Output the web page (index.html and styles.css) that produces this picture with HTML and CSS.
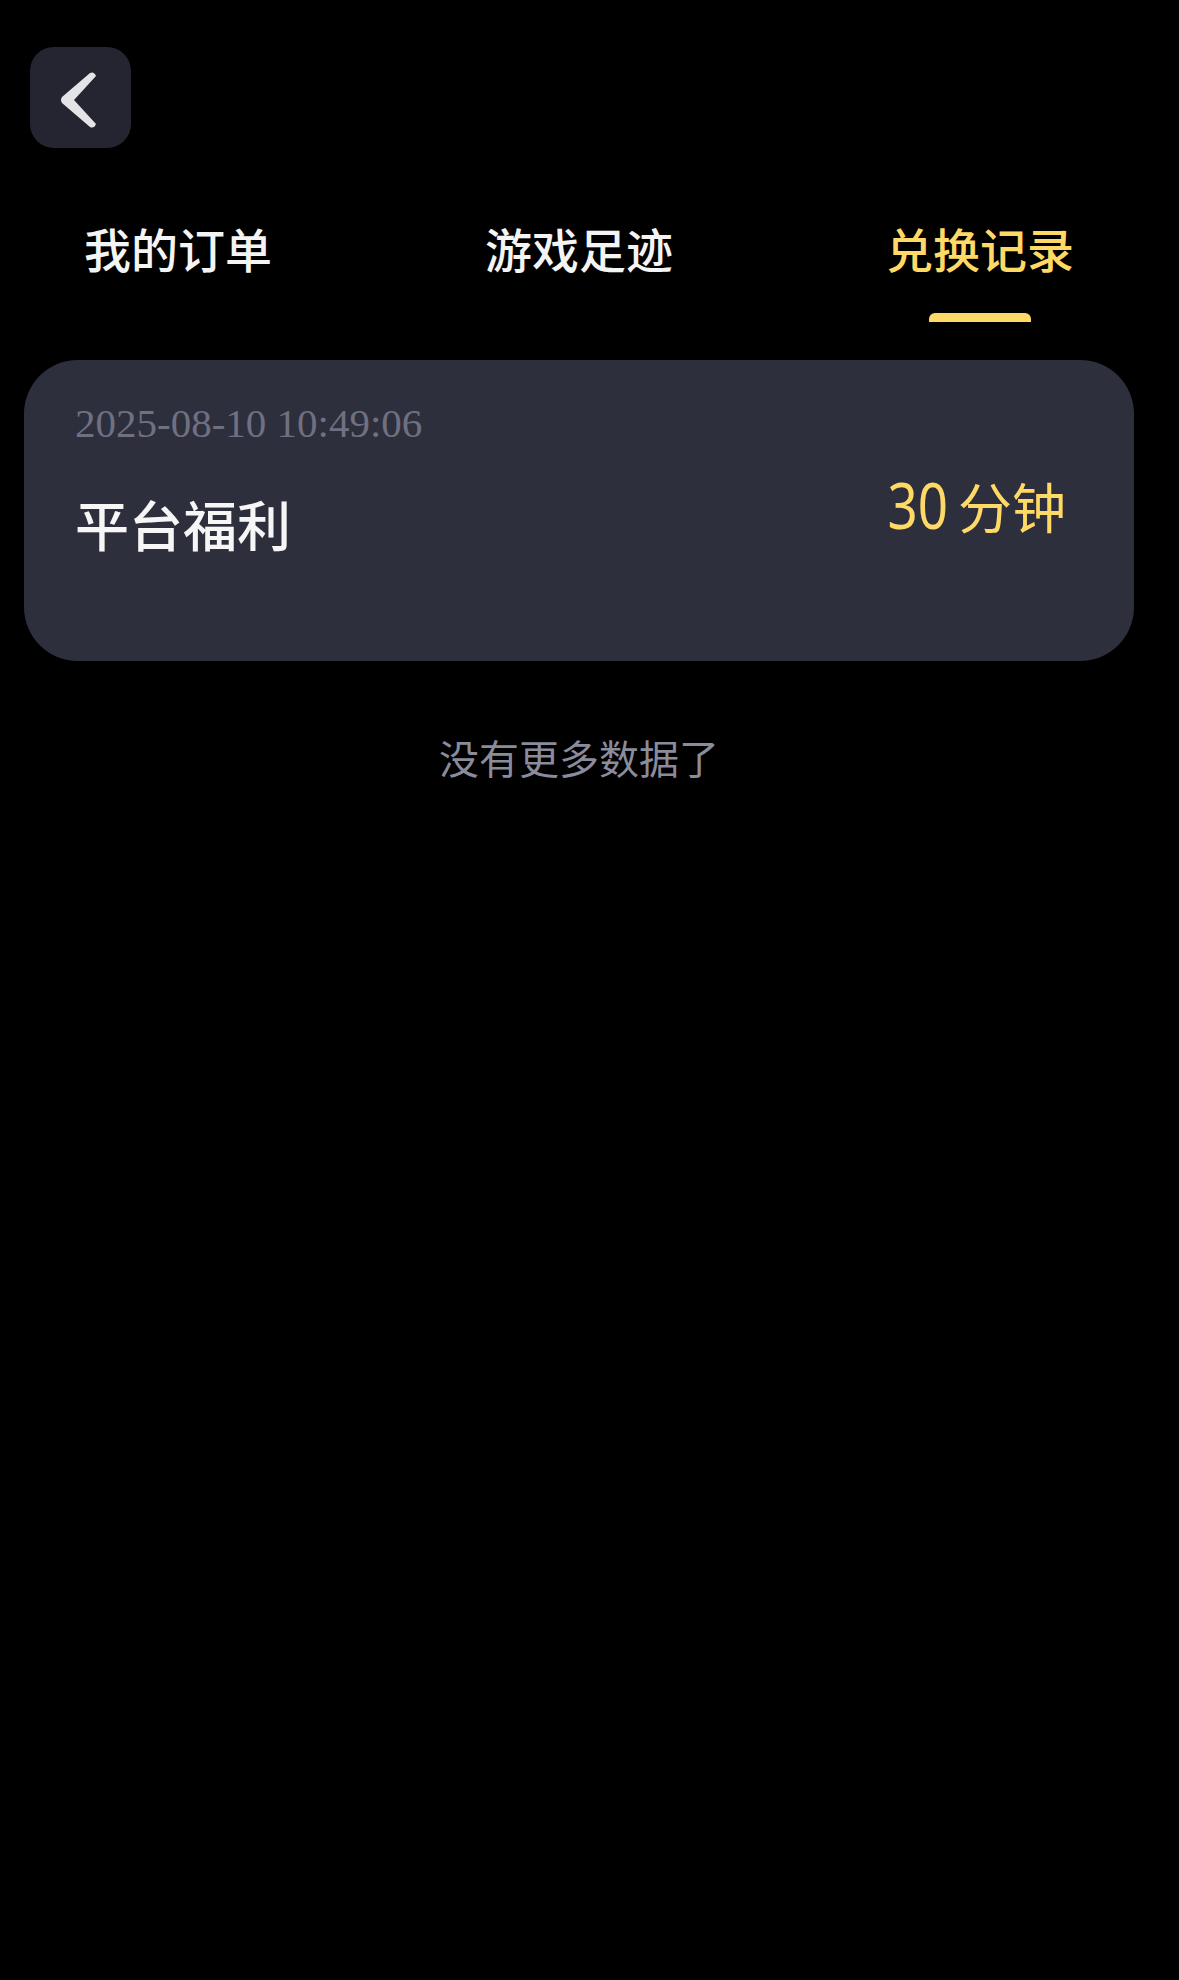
FILE: index.html
```html
<!DOCTYPE html>
<html lang="zh-CN">
<head>
<meta charset="utf-8">
<title>兑换记录</title>
<link rel="stylesheet" href="styles.css">
</head>
<body>
<div class="page">
  <header class="topbar">
    <button class="back-btn" type="button" aria-label="返回">
      <svg class="back-icon" viewBox="0 0 101 101" width="101" height="101">
        <path d="M60 26 L32 50 Q30 53 32 56 L60 80 Q64 82 66 77 L44 53 L66 29 Q64 24 60 26 Z"/>
      </svg>
    </button>
  </header>

  <nav class="tabs">
    <div class="tab">我的订单</div>
    <div class="tab">游戏足迹</div>
    <div class="tab tab-active">兑换记录</div>
  </nav>

  <main class="list">
    <section class="record-card">
      <div class="record-main">
        <div class="record-time">2025-08-10 10:49:06</div>
        <div class="record-title">平台福利</div>
      </div>
      <div class="record-amount"><span class="amount-num">30</span>分钟</div>
    </section>

    <p class="list-end">没有更多数据了</p>
  </main>
</div>
</body>
</html>
```

FILE: styles.css
```css
html, body {
  margin: 0;
  padding: 0;
  background: #000;
}

body {
  width: 1179px;
  min-height: 1980px;
  font-family: "Noto Sans CJK SC", "Noto Sans", sans-serif;
  color: #f2f2f2;
}

.page {
  display: flex;
  flex-direction: column;
}

/* top bar with back button */
.topbar {
  padding: 47px 0 0 30px;
  height: 101px;
}

.back-btn {
  width: 101px;
  height: 101px;
  border: 0;
  padding: 0;
  border-radius: 24px;
  background: #252532;
  display: flex;
  align-items: center;
  justify-content: center;
}

.back-icon {
  display: block;
  fill: #e4e4e6;
}

/* tab bar */
.tabs {
  display: flex;
  gap: 213px;
  padding-left: 84px;
  margin-top: 75px;
}

.tab {
  position: relative;
  font-size: 47px;
  line-height: 50px;
  font-weight: 500;
  color: #f4f4f4;
  white-space: nowrap;
  height: 99px;
}

.tab-active {
  color: #ffd966;
}

.tab-active::after {
  content: "";
  position: absolute;
  left: 50%;
  bottom: 0;
  width: 102px;
  height: 9px;
  margin-left: -51px;
  border-radius: 6px 6px 0 0;
  background: #ffd966;
}

/* records */
.list {
  margin-top: 38px;
  padding-left: 24px;
  width: 1110px;
}

.record-card {
  box-sizing: border-box;
  height: 301px;
  border-radius: 54px;
  background: #2e2f3d;
  padding: 39px 68px 0 51px;
  display: flex;
  justify-content: space-between;
  align-items: flex-start;
}

.record-main {
  display: flex;
  flex-direction: column;
}

.record-time {
  font-family: "Liberation Serif", "Times New Roman", serif;
  font-size: 41px;
  line-height: 48px;
  color: #6f7081;
}

.record-title {
  margin-top: 50px;
  font-size: 54px;
  line-height: 54px;
  font-weight: 500;
  color: #f6f6f6;
}

.record-amount {
  margin-top: 79px;
  font-size: 54px;
  line-height: 54px;
  color: #ffd966;
  white-space: nowrap;
}

/* tall, narrow figures for the amount */
.amount-num {
  display: inline-block;
  font-family: "Noto Sans", sans-serif;
  font-size: 63px;
  line-height: 54px;
  margin-right: 10px;
  transform: scaleX(0.84);
  transform-origin: right bottom;
}

.list-end {
  margin: 72px 0 0;
  text-align: center;
  font-size: 40px;
  line-height: 48px;
  color: #8a8b9b;
}
```
